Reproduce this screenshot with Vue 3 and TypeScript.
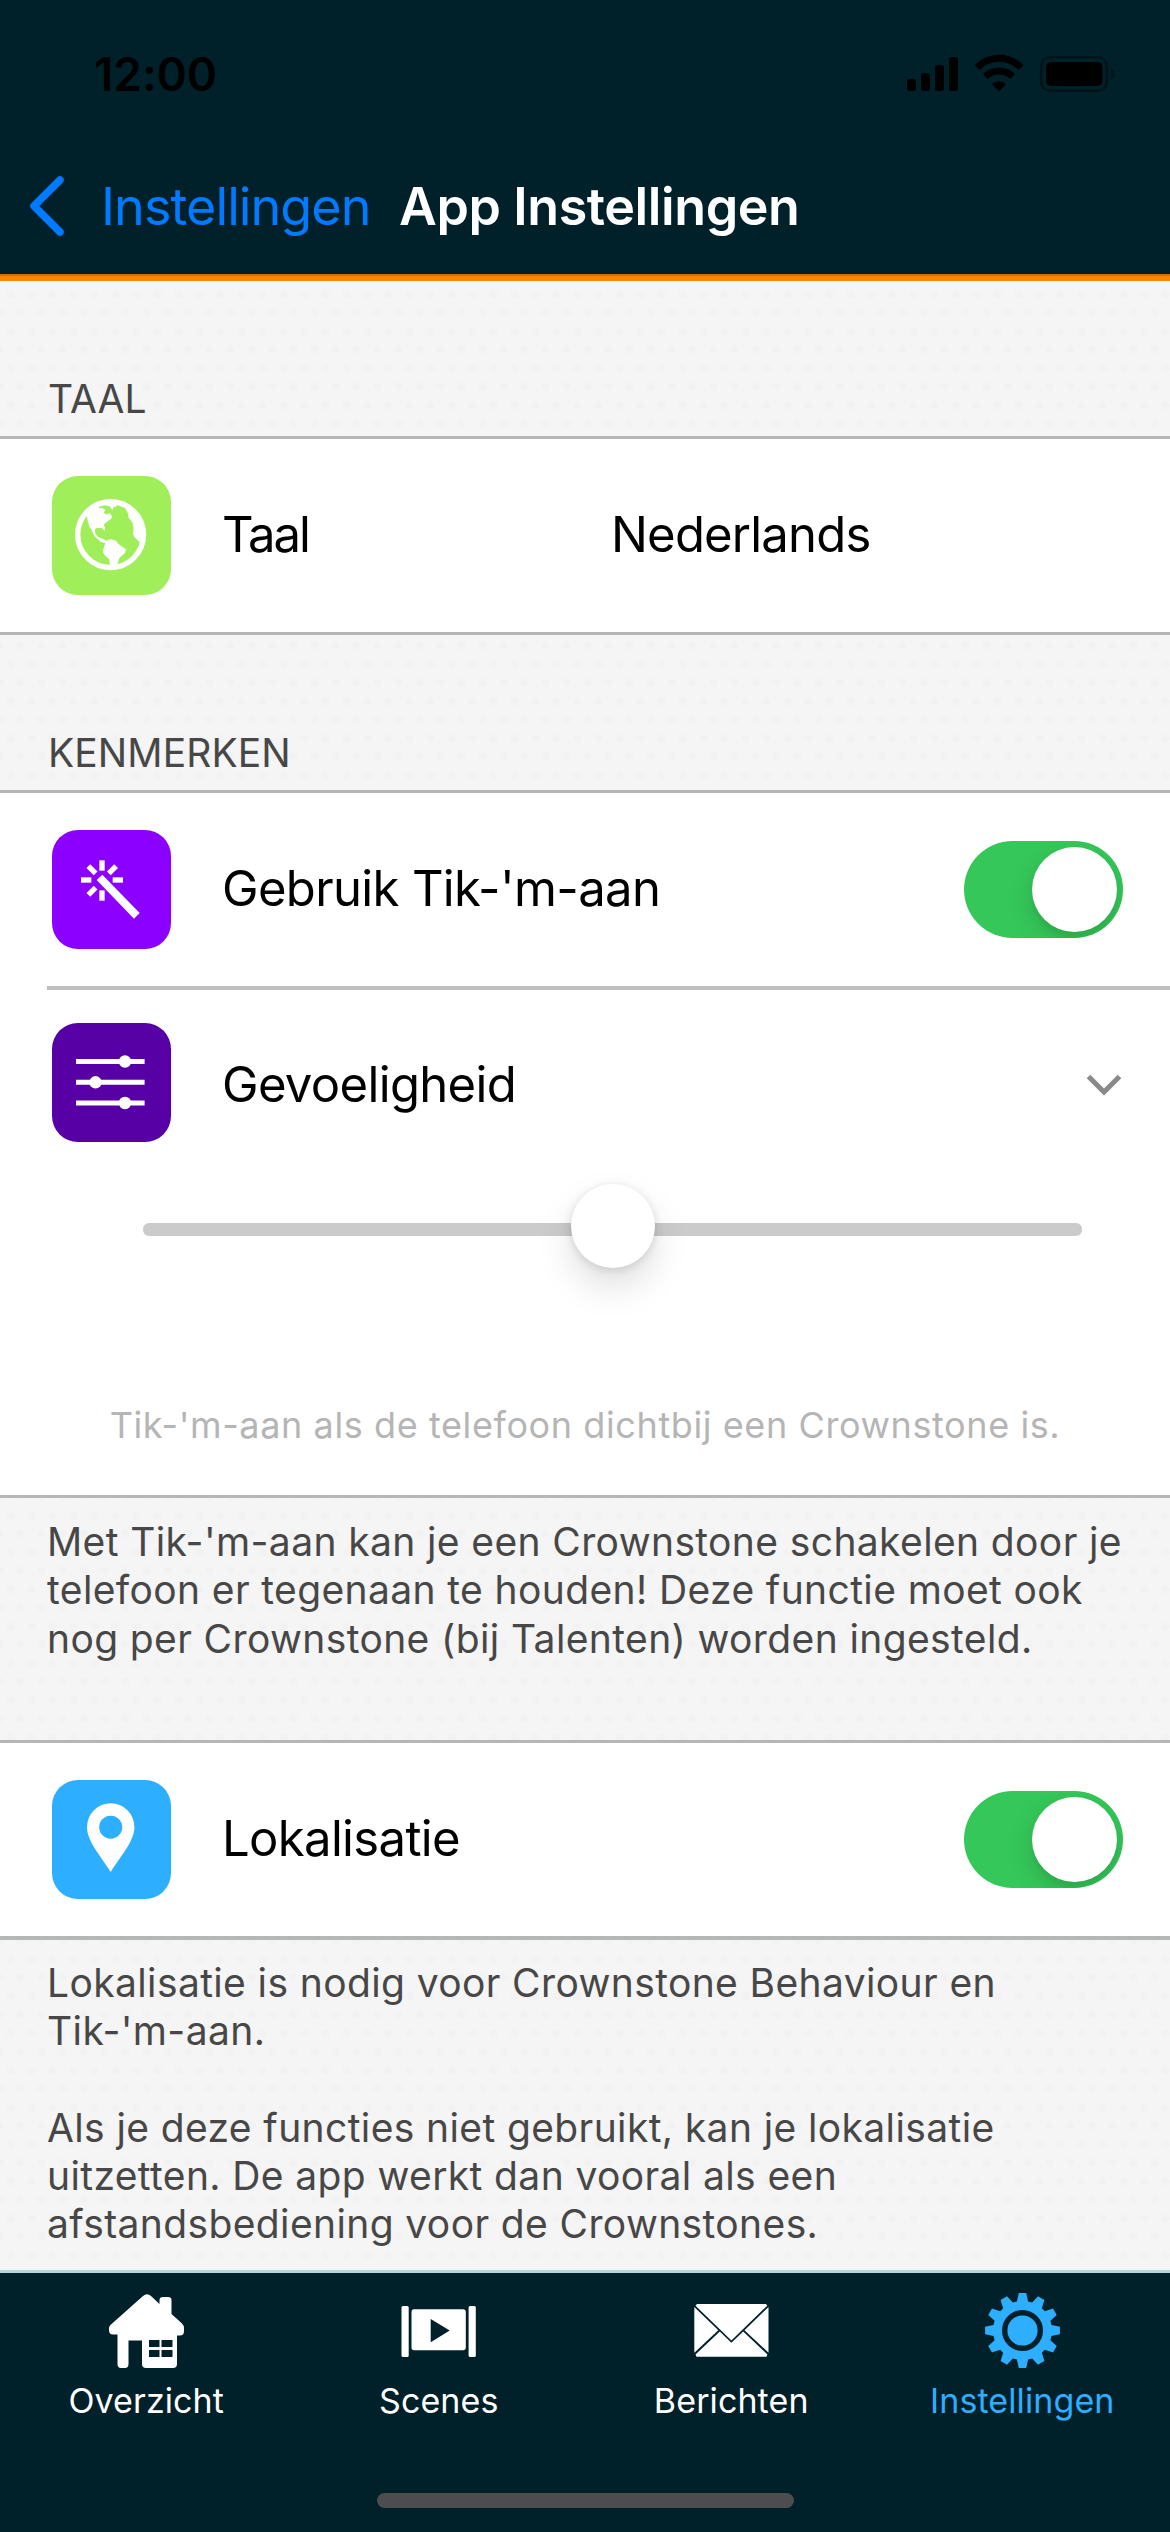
<script setup lang="ts">
import { ref } from 'vue'

interface Tab {
  id: string
  label: string
}

const tabs: Tab[] = [
  { id: 'overview', label: 'Overzicht' },
  { id: 'scenes', label: 'Scenes' },
  { id: 'messages', label: 'Berichten' },
  { id: 'settings', label: 'Instellingen' },
]

const activeTab = ref('settings')
const tapToToggle = ref(true)
const localization = ref(true)
const sensitivity = ref(50)

const tapInfo = `Met Tik-'m-aan kan je een Crownstone schakelen door je
telefoon er tegenaan te houden! Deze functie moet ook
nog per Crownstone (bij Talenten) worden ingesteld.`

const localizationInfo = `Lokalisatie is nodig voor Crownstone Behaviour en
Tik-'m-aan.

Als je deze functies niet gebruikt, kan je lokalisatie
uitzetten. De app werkt dan vooral als een
afstandsbediening voor de Crownstones.`

/** Outline of a gear with evenly spaced, slightly tapered teeth. */
function gearPath(teeth: number, outer: number, root: number): string {
  const points: string[] = []
  for (let i = 0; i < teeth; i++) {
    const angle = (i / teeth) * Math.PI * 2
    const corners: [number, number][] = [
      [root, -5.6],
      [outer, -3.7],
      [outer, 3.7],
      [root, 5.6],
    ]
    for (const [r, w] of corners) {
      const x = 37.5 + r * Math.sin(angle) + w * Math.cos(angle)
      const y = 37.5 - r * Math.cos(angle) + w * Math.sin(angle)
      points.push(`${x.toFixed(2)} ${y.toFixed(2)}`)
    }
  }
  return `M${points.join('L')}Z`
}

const gear = gearPath(12, 37.4, 29)
</script>

<template>
  <div class="screen">
    <header class="header">
      <div class="status">
        <span class="time">12:00</span>
        <svg class="status-icons" viewBox="0 0 210 40" width="210" height="40">
          <rect x="2" y="26" width="9" height="12" rx="2.5" />
          <rect x="16" y="20" width="9" height="18" rx="2.5" />
          <rect x="30" y="12" width="9" height="26" rx="2.5" />
          <rect x="44" y="4" width="9" height="34" rx="2.5" />
          <g fill="none" stroke="#000">
            <path d="M72.1 14.4a31 31 0 0 1 43.8 0" stroke-width="7" />
            <path d="M80.4 23.5a19.8 19.8 0 0 1 27.2 0" stroke-width="7" />
          </g>
          <path d="M87 31.2a10 10 0 0 1 14 0L94 38.2z" />
          <rect x="136.2" y="4.2" width="65.6" height="33.6" rx="9" fill="none" stroke="#000" stroke-opacity=".38" stroke-width="2.6" />
          <rect x="141" y="9" width="56.5" height="24" rx="5" />
          <path d="M206 15.5c5 2 5 9 0 11z" opacity=".4" />
        </svg>
      </div>
      <nav class="nav">
        <svg class="back" viewBox="0 0 36 62" width="36" height="62">
          <path d="M31 5L5 31L31 57" fill="none" stroke="#007aff" stroke-width="7.5" stroke-linecap="round" stroke-linejoin="round" />
        </svg>
        <span class="back-label">Instellingen</span>
        <h1 class="title">App Instellingen</h1>
      </nav>
    </header>

    <main class="content">
      <h2 class="heading">TAAL</h2>
      <section class="card">
        <div class="row">
          <span class="tile green">
            <svg viewBox="0 0 119 119">
              <circle cx="58.6" cy="58.6" r="32.9" fill="none" stroke="#fff" stroke-width="5.4" />
              <g transform="translate(14 12) scale(.33333)" fill="#fff">
                <path d="M62 80L76 60L98 47L118 42L150 44L152 56L144 56L139 66L131 55L118 52L101 55L97 59L106 61L109 59L118 66L113 74L121 79L132 76L138 86L136 92L118 105L113 111L117 118L116 129L108 121L94 119L87 123L88 137L97 147L112 153L122 158L134 154L150 158L158 169L180 184L177 195L160 210L153 232L132 233L130 214L115 200L110 189L118 166L104 161L85 144L77 126L70 116L65 98Z" />
                <path d="M178 63L196 66L222 90L238 134L232 160L219 161L206 148L201 138L203 121L199 103L188 89L186 76Z" />
              </g>
            </svg>
          </span>
          <span class="label lang">Taal</span>
          <span class="label value">Nederlands</span>
        </div>
      </section>

      <h2 class="heading">KENMERKEN</h2>
      <section class="card">
        <div class="row">
          <span class="tile violet">
            <svg viewBox="0 0 119 119">
              <g transform="translate(18 20) scale(.33333)" fill="#fff">
                <rect x="88" y="31" width="16" height="31" />
                <rect x="88" y="121" width="16" height="31" />
                <rect x="33" y="82" width="31" height="16" />
                <rect x="128" y="82" width="31" height="16" />
                <rect x="58" y="44" width="16" height="31" transform="rotate(-45 66 59.5)" />
                <rect x="119.5" y="44" width="16" height="31" transform="rotate(45 127.5 59.5)" />
                <rect x="58" y="108" width="16" height="31" transform="rotate(45 66 123.5)" />
                <path d="M80 90L97 74L209 189L192 206Z" />
              </g>
            </svg>
          </span>
          <span class="label">Gebruik Tik-'m-aan</span>
          <button class="toggle" :class="{ on: tapToToggle }" @click="tapToToggle = !tapToToggle"><i></i></button>
        </div>
        <div class="divider"></div>
        <div class="row sensitivity">
          <span class="tile purple">
            <svg viewBox="0 0 119 119">
              <path d="M24 38.5H92.6M24 59.3H92.6M24 80H92.6" stroke="#fff" stroke-width="5" />
              <g fill="#fff">
                <circle cx="73" cy="38.5" r="6.2" />
                <circle cx="43.5" cy="59.3" r="6.2" />
                <circle cx="73" cy="80" r="6.2" />
              </g>
            </svg>
          </span>
          <span class="label sens">Gevoeligheid</span>
          <svg class="chevron" viewBox="0 0 36 22" width="36" height="22">
            <path d="M2.5 2.5L18 18L33.5 2.5" fill="none" stroke="#8a8a8a" stroke-width="5" />
          </svg>
        </div>
        <div class="slider">
          <div class="track"><i class="thumb" :style="{ left: sensitivity + '%' }"></i></div>
        </div>
        <p class="hint">Tik-'m-aan als de telefoon dichtbij een Crownstone is.</p>
      </section>
      <p class="info first">{{ tapInfo }}</p>

      <section class="card last">
        <div class="row">
          <span class="tile blue">
            <svg viewBox="0 0 119 119">
              <path d="M58.7 92C48 75 35 61 35 47A23.7 23.7 0 0 1 82.4 47C82.4 61 69.4 75 58.7 92Z" fill="#fff" />
              <circle cx="58.7" cy="47.2" r="11.5" fill="#2daeff" />
            </svg>
          </span>
          <span class="label">Lokalisatie</span>
          <button class="toggle" :class="{ on: localization }" @click="localization = !localization"><i></i></button>
        </div>
      </section>
      <p class="info">{{ localizationInfo }}</p>
    </main>

    <footer class="tabbar">
      <div class="tabs">
        <div
          v-for="tab in tabs"
          :key="tab.id"
          class="tab"
          :class="[tab.id, { active: tab.id === activeTab }]"
          @click="activeTab = tab.id"
        >
          <svg v-if="tab.id === 'overview'" viewBox="0 0 75 75" width="75" height="75" fill="currentColor">
            <path fill-rule="evenodd" d="M34 3Q38 -.5 42 3L50.5 11V7Q50.5 4 54 4H59Q62.5 4 62.5 7V21L73 30.5Q75 32.5 75 35V38Q75 42.5 71 42.5H68V71Q68 75 64 75H37Q33 75 33 71V47.5H19.5V71Q19.5 75 16 75H12Q8.5 75 8.5 71V41.5H4Q0 41.5 0 37V35Q0 33 2 31.5ZM40 47V54H50.5V47ZM52.5 47V54H63.5V47ZM40 57V64H50.5V57ZM52.5 57V64H63.5V57Z" />
          </svg>
          <svg v-else-if="tab.id === 'scenes'" viewBox="0 0 75 75" width="75" height="75" fill="currentColor">
            <rect x="0.5" y="13" width="7.2" height="51" rx="1.5" />
            <rect x="67.6" y="13" width="7.2" height="51" rx="1.5" />
            <path fill-rule="evenodd" d="M13 16.3H62Q64.8 16.3 64.8 19V54.5Q64.8 57.3 62 57.3H13Q10.5 57.3 10.5 54.5V19Q10.5 16.3 13 16.3ZM29.7 26V49.3L48.7 37.6Z" />
          </svg>
          <svg v-else-if="tab.id === 'messages'" viewBox="0 0 75 75" width="75" height="75" fill="currentColor">
            <path d="M3 11H72L73.2 12.7L37.4 47.5L1.5 12.7Z" />
            <path d="M.3 14L24.3 37.2L.3 59.7Z" />
            <path d="M74.5 14L50.5 37.2L74.5 59.7Z" />
            <path d="M1.5 61.5L25.8 38.4L37.4 49.7L49.2 38.4L73.4 61.5L72.5 63.8H2.5Z" />
          </svg>
          <svg v-else viewBox="0 0 75 75" width="75" height="75" fill="currentColor">
            <path :d="gear" />
            <circle cx="37.5" cy="37.5" r="17.8" fill="none" stroke="#00202a" stroke-width="5.4" />
          </svg>
          <span>{{ tab.label }}</span>
        </div>
      </div>
      <div class="home-indicator"></div>
    </footer>
  </div>
</template>

<style>
body {
  margin: 0;
}
</style>

<style scoped>
.screen {
  width: 1170px;
  height: 2532px;
  display: flex;
  flex-direction: column;
  overflow: hidden;
  font-family: Inter, 'Liberation Sans', sans-serif;
  color: #000;
}

.header {
  flex: none;
  height: 276px;
  box-sizing: border-box;
  background: #00202a;
  border-bottom: 2px solid #d27106;
  box-shadow: 0 5px 0 #ff8500;
  position: relative;
  z-index: 1;
}

.status {
  display: flex;
  justify-content: space-between;
  align-items: flex-start;
  height: 144px;
  padding: 0 55px 0 94px;
}

.time {
  margin-top: 44px;
  line-height: 60px;
  font-size: 46px;
  font-weight: 600;
  letter-spacing: -0.1px;
}

.status-icons {
  margin-top: 53px;
}

.nav {
  display: flex;
  align-items: center;
  height: 124px;
  padding-left: 29px;
}

.back-label {
  margin-left: 36px;
  width: 298px;
  font-size: 52px;
  letter-spacing: -0.9px;
  color: #007aff;
  white-space: nowrap;
}

.title {
  margin: 0;
  font-size: 52px;
  font-weight: 600;
  letter-spacing: -0.4px;
  color: #fff;
  white-space: nowrap;
}

.content {
  flex: 1;
  min-height: 0;
  padding-top: 5px;
  overflow: hidden;
  background-color: #f5f5f5;
  background-image:
    radial-gradient(circle, #f2f2f2 3px, transparent 5px),
    radial-gradient(circle, #f2f2f2 3px, transparent 5px);
  background-size: 21px 37px;
  background-position: 0 0, 10px 18px;
}

.heading {
  margin: 0;
  height: 155px;
  box-sizing: border-box;
  padding: 94px 0 0 48px;
  font-size: 39px;
  line-height: 48px;
  font-weight: 400;
  letter-spacing: 0.1px;
  color: #474747;
}

.card {
  background: #fff;
  border-top: 3px solid #b5b7b7;
  border-bottom: 3px solid #b5b7b7;
}

.card.last {
  border-bottom-width: 4px;
}

.row {
  display: flex;
  align-items: center;
  height: 193px;
  padding: 0 47px 0 52px;
}

.row.sensitivity {
  height: 190px;
}

.sensitivity .tile {
  margin-bottom: 6px;
}

.divider {
  height: 4px;
  margin-left: 47px;
  background: #bebebe;
}

.tile {
  flex: none;
  width: 119px;
  height: 119px;
  border-radius: 26px;
}

.tile svg {
  display: block;
  width: 119px;
  height: 119px;
}

.green {
  background: #a0ee5a;
}

.violet {
  background: #8b00ff;
}

.purple {
  background: #5600a5;
}

.blue {
  background: #2daeff;
}

.label {
  margin-left: 51px;
  padding-bottom: 2px;
  font-size: 49px;
  line-height: 60px;
  letter-spacing: -0.65px;
  white-space: nowrap;
}

.label.sens {
  padding-bottom: 0;
}

.label.lang {
  width: 389px;
  letter-spacing: -2px;
}

.label.value {
  margin-left: 0;
  letter-spacing: -0.8px;
}

.toggle {
  flex: none;
  display: flex;
  justify-content: flex-start;
  width: 159px;
  height: 97px;
  margin-left: auto;
  padding: 6px;
  border: 0;
  border-radius: 49px;
  background: #e9e9ea;
  overflow: hidden;
}

.toggle.on {
  justify-content: flex-end;
  background: #35c759;
}

.toggle i {
  width: 85px;
  height: 85px;
  border-radius: 50%;
  background: #fff;
  box-shadow: 0 9px 24px rgba(0, 0, 0, 0.15), 0 6px 3px rgba(0, 0, 0, 0.03);
}

.chevron {
  margin-left: auto;
  margin-right: 1px;
}

.slider {
  padding: 43px 88px 0 143px;
}

.track {
  position: relative;
  height: 13px;
  border-radius: 6px;
  background: #cbcbcb;
}

.thumb {
  position: absolute;
  top: -39.5px;
  width: 84px;
  height: 84px;
  margin-left: -42px;
  border-radius: 50%;
  background: #fff;
  box-shadow: 0 18px 36px rgba(0, 0, 0, 0.13), 0 2px 10px rgba(0, 0, 0, 0.13);
}

.hint {
  margin: 0;
  padding: 165px 0 46px;
  text-align: center;
  font-size: 36px;
  line-height: 48px;
  letter-spacing: 0.6px;
  color: #b5b5b5;
  white-space: nowrap;
}

.info {
  margin: 0;
  padding: 19px 0 0 47px;
  font-size: 39px;
  line-height: 48.3px;
  letter-spacing: 0.38px;
  color: #474747;
  white-space: pre;
}

.info.first {
  height: 222px;
  padding-top: 20px;
}

.tabbar {
  flex: none;
  height: 262px;
  box-sizing: border-box;
  border-top: 3px solid #b2d8dc;
  background: #00202a;
  color: #fff;
}

.tabs {
  display: flex;
  height: 220px;
}

.tab {
  flex: none;
  width: 25%;
  box-sizing: border-box;
  display: flex;
  flex-direction: column;
  align-items: center;
  padding-top: 20px;
  font-size: 34px;
  line-height: 44px;
}

.tab svg {
  display: block;
}

.tab span {
  margin-top: 11px;
  letter-spacing: 0.1px;
}

.tab.settings {
  padding-right: 3px;
}

.tab.active {
  color: #2daeff;
}

.home-indicator {
  width: 417px;
  height: 15px;
  margin: 0 auto;
  border-radius: 8px;
  background: #4d4d4d;
}
</style>
